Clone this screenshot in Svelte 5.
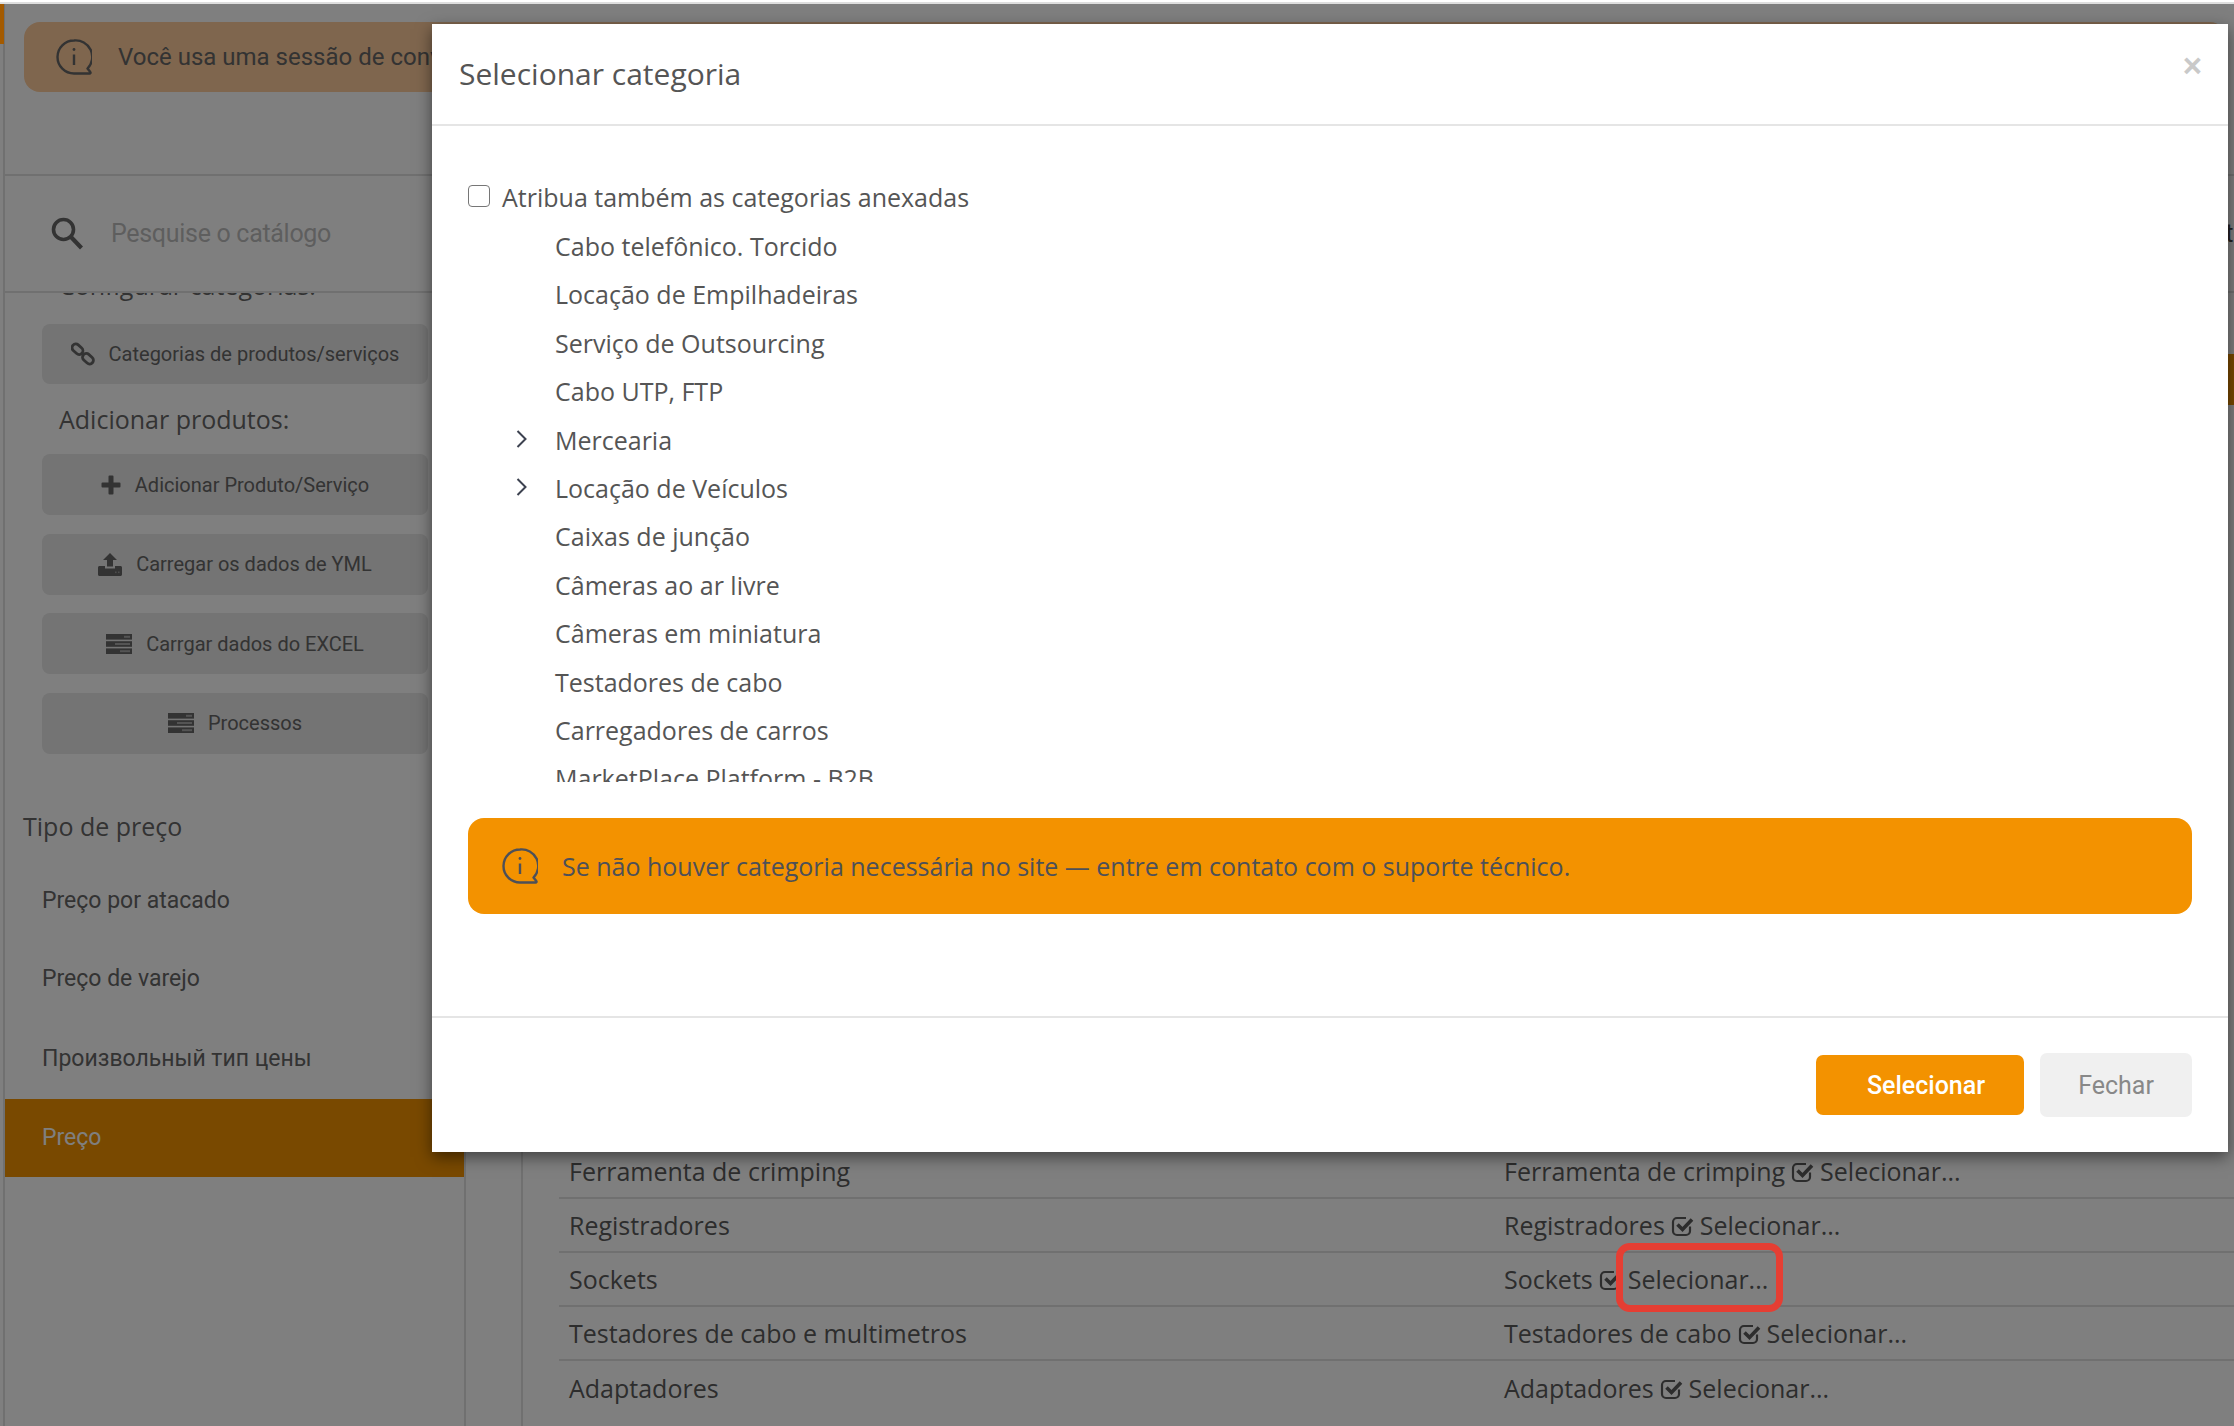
<script>
    const actions = [
        { label: 'Adicionar Produto/Serviço', icon: 'plus' },
        { label: 'Carregar os dados de YML', icon: 'upload' },
        { label: 'Carrgar dados do EXCEL', icon: 'server' },
        { label: 'Processos', icon: 'server' }
    ];
    const priceTypes = ['Preço por atacado', 'Preço de varejo', 'Произвольный тип цены'];
    const categories = [
        { name: 'Cabo telefônico. Torcido' },
        { name: 'Locação de Empilhadeiras' },
        { name: 'Serviço de Outsourcing' },
        { name: 'Cabo UTP, FTP' },
        { name: 'Mercearia', children: true },
        { name: 'Locação de Veículos', children: true },
        { name: 'Caixas de junção' },
        { name: 'Câmeras ao ar livre' },
        { name: 'Câmeras em miniatura' },
        { name: 'Testadores de cabo' },
        { name: 'Carregadores de carros' },
        { name: 'MarketPlace Platform - B2B' }
    ];
    const rows = [
        { name: 'Ferramenta de crimping', mapped: 'Ferramenta de crimping' },
        { name: 'Registradores', mapped: 'Registradores' },
        { name: 'Sockets', mapped: 'Sockets' },
        { name: 'Testadores de cabo e multimetros', mapped: 'Testadores de cabo' },
        { name: 'Adaptadores', mapped: 'Adaptadores' }
    ];
</script>

{#snippet infoIcon(size)}
    <svg class="info" width={size} height={size} viewBox="0 0 36 36" fill="none" stroke="currentColor" stroke-width="2.4">
        <path d="M18 1.5a16.5 16.5 0 1 0 0 33h15.6c.9 0 1.2-.8.7-1.4l-2.8-3.6A16.5 16.5 0 0 0 18 1.5z" stroke-linejoin="round" />
        <path d="M18 15.5v10.5" />
        <circle cx="18" cy="10.5" r="1.4" fill="currentColor" stroke="none" />
    </svg>
{/snippet}

{#snippet actionIcon(name)}
    {#if name === 'plus'}
        <svg width="20" height="20" viewBox="0 0 20 20" fill="currentColor">
            <path d="M7.5 1.5a1 1 0 0 1 1-1h3a1 1 0 0 1 1 1v6h6a1 1 0 0 1 1 1v3a1 1 0 0 1-1 1h-6v6a1 1 0 0 1-1 1h-3a1 1 0 0 1-1-1v-6h-6a1 1 0 0 1-1-1v-3a1 1 0 0 1 1-1h6z" />
        </svg>
    {:else if name === 'upload'}
        <svg width="24" height="23" viewBox="0 0 24 23" fill="currentColor">
            <path d="M12 0l7 7h-4v6.500h-6V7H5z" />
            <path d="M1.500 13H7v2.500h10V13h5.500c.8 0 1.500.7 1.500 1.500v7c0 .8-.7 1.500-1.500 1.500h-21C.7 23 0 22.300 0 21.500v-7C0 13.700.7 13 1.500 13z" />
            <rect x="17" y="18.500" width="1.600" height="1.600" fill="#9a9a9a" />
            <rect x="20" y="18.500" width="1.600" height="1.600" fill="#9a9a9a" />
        </svg>
    {:else}
        <svg width="26" height="20" viewBox="0 0 26 20" fill="currentColor">
            <rect y="0" width="26" height="5.600" />
            <rect y="7.200" width="26" height="5.600" />
            <rect y="14.400" width="26" height="5.600" />
            <rect x="18" y="1.800" width="6" height="2" fill="#a8a8a8" />
            <rect x="9" y="9" width="15" height="2" fill="#a8a8a8" />
            <rect x="14" y="16.200" width="10" height="2" fill="#a8a8a8" />
        </svg>
    {/if}
{/snippet}

<div class="page">
    <div class="topline"></div>
    <div class="frame">
        <div class="rail"></div>
        <div class="content">
            <div class="notice">
                {@render infoIcon(36)}
                <span>Você usa uma sessão de convidado. Os dados não serão salvos após sair.</span>
            </div>

            <div class="search">
                <svg width="32" height="33" viewBox="0 0 32 33" fill="none" stroke="currentColor">
                    <circle cx="12.500" cy="12.500" r="10" stroke-width="3.600" />
                    <path d="M20 20l10.500 11" stroke-width="4.200" />
                </svg>
                <span class="placeholder">Pesquise o catálogo</span>
                <span class="search-end">Buscar tabela</span>
            </div>

            <div class="columns">
                <aside class="sidebar">
                    <div class="scrolled">
                        <h4 class="clipped">Configurar categorias:</h4>
                        <div class="action first">
                            <svg width="24" height="24" viewBox="0 0 24 24" fill="none" stroke="currentColor" stroke-width="2.800">
                                <rect x="0.500" y="3.500" width="12" height="7.500" rx="3.700" transform="rotate(42 6.500 7.200)" />
                                <rect x="11" y="13" width="12" height="7.500" rx="3.700" transform="rotate(42 17 16.700)" />
                            </svg>
                            Categorias de produtos/serviços
                        </div>
                        <h4 class="group">Adicionar produtos:</h4>
                        <div class="actions">
                            {#each actions as action}
                                <div class="action">
                                    {@render actionIcon(action.icon)}
                                    {action.label}
                                </div>
                            {/each}
                        </div>
                        <h4 class="price-title">Tipo de preço</h4>
                        <ul class="price-list">
                            {#each priceTypes as type}
                                <li>{type}</li>
                            {/each}
                            <li class="active">Preço</li>
                        </ul>
                    </div>
                </aside>

                <main class="main">
                    <div class="panel">
                        <div class="save-bar"></div>
                        <div class="table">
                            {#each rows as row}
                                <div class="row">
                                    <div class="cell-name">{row.name}</div>
                                    <div class="cell-map">
                                        {row.mapped}
                                        <svg class="check" width="23" height="23" viewBox="0 0 23 23" fill="none" stroke="currentColor">
                                            <path d="M19 12.500v4.500a4 4 0 0 1-4 4H6a4 4 0 0 1-4-4V8a4 4 0 0 1 4-4h9" stroke-width="2.200" />
                                            <path d="M6.500 10.500l5 5L21 5.500" stroke-width="3.600" />
                                        </svg>
                                        Selecionar...
                                    </div>
                                </div>
                            {/each}
                        </div>
                    </div>
                </main>
            </div>
        </div>
    </div>

    <div class="backdrop"></div>
    <div class="corner"></div>

    <div class="modal">
        <header class="modal-head">
            <h3>Selecionar categoria</h3>
            <span class="close">×</span>
        </header>
        <div class="modal-body">
            <label class="assign">
                <input type="checkbox" />
                Atribua também as categorias anexadas
            </label>
            <ul class="tree">
                {#each categories as category}
                    <li>
                        {#if category.children}
                            <svg class="chevron" width="11" height="18" viewBox="0 0 11 18" fill="none" stroke="currentColor" stroke-width="2">
                                <path d="M1.500 1l8 8-8 8" />
                            </svg>
                        {/if}
                        {category.name}
                    </li>
                {/each}
            </ul>
            <div class="alert">
                {@render infoIcon(36)}
                <span>Se não houver categoria necessária no site — entre em contato com o suporte técnico.</span>
            </div>
        </div>
        <footer class="modal-foot">
            <button class="btn primary">Selecionar</button>
            <button class="btn muted">Fechar</button>
        </footer>
    </div>

    <div class="callout"></div>
</div>

<style>
    :global(body) {
        margin: 0;
        background: #fff;
    }
    .page {
        position: relative;
        width: 2234px;
        height: 1426px;
        overflow: hidden;
        background: #fff;
        color: #666;
        font-family: Roboto, "Liberation Sans", sans-serif;
    }
    .topline {
        height: 2px;
        border-bottom: 2px solid #dedede;
    }
    .frame {
        display: flex;
        height: 1422px;
    }
    .rail {
        width: 5px;
        box-sizing: border-box;
        border-right: 2px solid #e0e0e0;
        flex: none;
    }
    .content {
        flex: 1;
        min-width: 0;
        display: flex;
        flex-direction: column;
    }
    .notice {
        margin: 18px 8px 0 19px;
        height: 70px;
        flex: none;
        box-sizing: border-box;
        padding-left: 32px;
        display: flex;
        align-items: center;
        gap: 26px;
        border-radius: 16px;
        background: #ffcc9c;
        font-size: 24px;
        white-space: nowrap;
        overflow: hidden;
    }
    .search {
        margin-top: 82px;
        height: 119px;
        flex: none;
        box-sizing: border-box;
        padding-left: 46px;
        display: flex;
        align-items: center;
        gap: 28px;
        border-top: 2px solid #e0e0e0;
        border-bottom: 2px solid #e0e0e0;
        white-space: nowrap;
    }
    .placeholder {
        color: #bdbdbd;
        font-size: 25px;
        letter-spacing: -0.3px;
    }
    .search-end {
        margin-left: auto;
        margin-right: -60px;
        color: #444;
        font-size: 25px;
    }
    .columns {
        flex: 1;
        min-height: 0;
        display: flex;
    }
    .sidebar {
        width: 461px;
        flex: none;
        box-sizing: border-box;
        border-right: 2px solid #e0e0e0;
        overflow: hidden;
    }
    .scrolled {
        margin-top: -29px;
    }
    h4 {
        margin: 0;
        font-family: "Open Sans", sans-serif;
        font-weight: 400;
        font-size: 25px;
    }
    .clipped {
        padding-left: 54px;
        height: 60px;
        line-height: 42px;
    }
    .action {
        margin-left: 37px;
        width: 386px;
        height: 61px;
        display: flex;
        align-items: center;
        justify-content: center;
        gap: 14px;
        border-radius: 8px;
        background: #e8e8e8;
        font-size: 20px;
        white-space: nowrap;
    }
    .action.first {
        height: 60px;
    }
    .group {
        height: 70px;
        padding-left: 54px;
        line-height: 70px;
    }
    .actions {
        display: flex;
        flex-direction: column;
        gap: 18.500px;
    }
    .price-title {
        padding: 54px 0 0 18px;
        height: 54px;
        line-height: 36px;
    }
    .price-list {
        list-style: none;
        margin: 0;
        padding: 0;
        font-size: 23px;
    }
    .price-list li {
        height: 78px;
        padding-left: 37px;
        display: flex;
        align-items: center;
    }
    .price-list li:nth-child(3) {
        height: 81px;
    }
    .price-list li.active {
        margin-right: -1px;
        background: #f39200;
        color: #fff;
    }
    .main {
        flex: 1;
        min-width: 0;
        padding-left: 55px;
    }
    .panel {
        height: 100%;
        box-sizing: border-box;
        padding: 61px 0 0 36px;
        border-left: 2px solid #e0e0e0;
        font-family: "Open Sans", sans-serif;
        font-size: 25px;
    }
    .save-bar {
        width: 200px;
        height: 51px;
        margin-left: auto;
        background: #f39200;
    }
    .table {
        margin-top: 740px;
        color: #5a5a5a;
    }
    .row {
        height: 54px;
        box-sizing: border-box;
        display: flex;
        align-items: center;
        padding-left: 10px;
        border-bottom: 2px solid #e0e0e0;
        white-space: nowrap;
    }
    .row:last-child {
        border-bottom: 0;
    }
    .cell-name {
        width: 935px;
        flex: none;
    }
    .cell-map {
        display: flex;
        align-items: center;
        gap: 6px;
    }
    .backdrop {
        position: absolute;
        inset: 4px 0 0 0;
        background: rgba(0, 0, 0, 0.5);
    }
    .corner {
        position: absolute;
        left: 0;
        top: 4px;
        width: 4px;
        height: 40px;
        background: #a35a00;
    }
    .modal {
        position: absolute;
        left: 432px;
        top: 24px;
        width: 1796px;
        height: 1128px;
        display: flex;
        flex-direction: column;
        background: #fff;
        box-shadow: 0 5px 15px rgba(0, 0, 0, 0.5);
        font-family: "Open Sans", sans-serif;
        color: #555;
    }
    .modal-head {
        height: 102px;
        box-sizing: border-box;
        flex: none;
        display: flex;
        align-items: center;
        justify-content: space-between;
        padding: 0 26px 2px 27px;
        border-bottom: 2px solid #e5e5e5;
    }
    h3 {
        margin: 0;
        font-size: 30px;
        font-weight: 400;
    }
    .close {
        font-family: "Liberation Sans", sans-serif;
        font-weight: 700;
        font-size: 33px;
        line-height: 1;
        color: #c9c9c9;
        margin-bottom: 16px;
    }
    .modal-body {
        flex: 1;
        min-height: 0;
        padding: 48px 36px 0;
    }
    .assign {
        display: flex;
        align-items: center;
        gap: 12px;
        height: 46px;
        font-size: 25px;
    }
    input[type="checkbox"] {
        appearance: none;
        margin: 0 0 2px;
        width: 22px;
        height: 22px;
        box-sizing: border-box;
        border: 1.500px solid #767676;
        border-radius: 4px;
        background: #fff;
    }
    .tree {
        list-style: none;
        margin: 2px 0 0;
        padding: 0 0 0 87px;
        height: 560px;
        overflow: hidden;
        font-size: 25px;
    }
    .tree li {
        position: relative;
        height: 48.400px;
        line-height: 48.400px;
        white-space: nowrap;
    }
    .chevron {
        position: absolute;
        left: -39px;
        top: 14px;
        color: #3d4250;
    }
    .alert {
        margin-top: 36px;
        height: 96px;
        box-sizing: border-box;
        padding-left: 34px;
        display: flex;
        align-items: center;
        gap: 24px;
        border-radius: 16px;
        background: #f39200;
        color: #4d5058;
        font-size: 25px;
    }
    .modal-foot {
        height: 136px;
        flex: none;
        box-sizing: border-box;
        display: flex;
        align-items: center;
        justify-content: flex-end;
        gap: 16px;
        padding-right: 36px;
        border-top: 2px solid #e5e5e5;
    }
    .btn {
        border: 0;
        font-family: Roboto, sans-serif;
        font-size: 25px;
    }
    .primary {
        width: 208px;
        height: 60px;
        padding-left: 18px;
        border-radius: 7px;
        background: #f39200;
        color: #fff;
        font-weight: 500;
    }
    .muted {
        width: 152px;
        height: 64px;
        border-radius: 7px;
        background: #f0f0f0;
        color: #888;
    }
    .callout {
        position: absolute;
        left: 1616px;
        top: 1243px;
        width: 167px;
        height: 69px;
        box-sizing: border-box;
        border: 7px solid #e53e33;
        border-radius: 14px;
    }
</style>
